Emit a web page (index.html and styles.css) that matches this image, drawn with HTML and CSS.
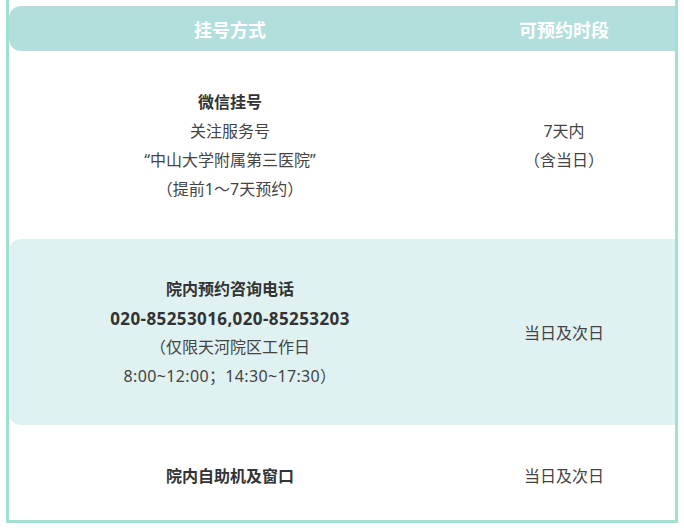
FILE: index.html
```html
<!DOCTYPE html>
<html lang="zh-CN">
<head>
<meta charset="utf-8">
<title>挂号方式</title>
<link rel="stylesheet" href="styles.css">
</head>
<body>
<div class="frame">
  <div class="table">
    <div class="head">
      <div class="cell">挂号方式</div>
      <div class="cell">可预约时段</div>
    </div>
    <div class="row">
      <div class="cell">
        <div class="b">微信挂号</div>
        <div>关注服务号</div>
        <div>“中山大学附属第三医院”</div>
        <div>（提前1～7天预约）</div>
      </div>
      <div class="cell">
        <div>7天内</div>
        <div>（含当日）</div>
      </div>
    </div>
    <div class="row alt">
      <div class="cell">
        <div class="b">院内预约咨询电话</div>
        <div class="b phone">020-85253016,020-85253203</div>
        <div>（仅限天河院区工作日</div>
        <div class="time">8:00~12:00；14:30~17:30）</div>
      </div>
      <div class="cell">
        <div>当日及次日</div>
      </div>
    </div>
    <div class="row">
      <div class="cell">
        <div class="b">院内自助机及窗口</div>
      </div>
      <div class="cell">
        <div>当日及次日</div>
      </div>
    </div>
  </div>
</div>
</body>
</html>
```
FILE: styles.css
```css
html, body {
  margin: 0;
  padding: 0;
  background: #ffffff;
}
body {
  font-family: "Noto Sans", "Noto Sans CJK SC", sans-serif;
  color: #444;
}
.frame {
  margin-left: 6px;
  width: 666px;
  height: 514px;
  border: 3px solid #9fe2d4;
  border-top: none;
  overflow: hidden;
  padding-top: 6px;
  box-sizing: content-box;
}
.table {
  width: 668px;
}
.head, .row {
  display: grid;
  grid-template-columns: 442px 226px;
}
.head {
  height: 45px;
  background: #b2dfdc;
  border-radius: 12px 0 0 12px;
  color: #ffffff;
  font-weight: bold;
  font-size: 18px;
  align-items: center;
  text-align: center;
}
.row {
  padding: 37px 0 35px;
  font-size: 16px;
  line-height: 29px;
  text-align: center;
  align-items: center;
  border-radius: 12px 0 0 12px;
}
.row.alt {
  background: #e0f1f1;
  padding: 36px 0 34px;
}
.b {
  font-weight: bold;
  color: #333;
}
.phone {
  font-size: 17px;
  letter-spacing: 0.4px;
}
.time {
  letter-spacing: 0.35px;
}
```
